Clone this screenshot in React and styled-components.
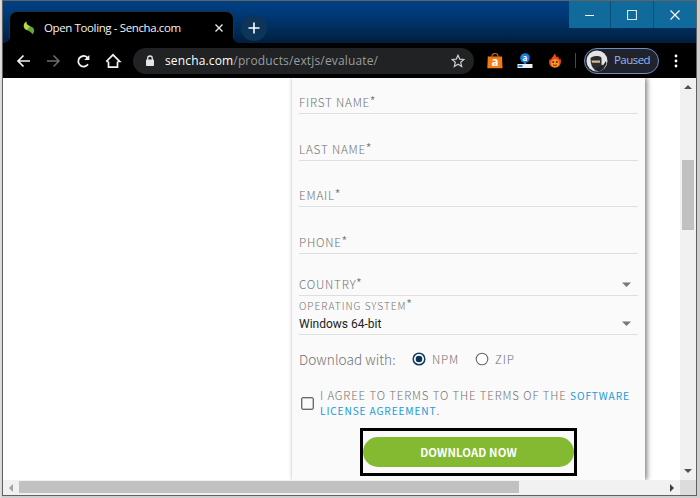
import React from 'react';
import styled, { createGlobalStyle } from 'styled-components';

const Global = createGlobalStyle`
  * { box-sizing: border-box; }
  html, body { margin: 0; padding: 0; background: #d4d4d4; overflow: hidden; }
`;

const ui = `'Open Sans', 'Noto Sans', sans-serif`;
const formFont = `'Noto Sans CJK JP', 'Noto Sans', sans-serif`;

const Desktop = styled.div`
  width: 700px;
  height: 498px;
  padding: 0 3px 2px 2px;
  background: linear-gradient(90deg, #e4e4e4, #cfcfcf 2px, #cfcfcf);
`;
const Window = styled.div`
  width: 695px;
  height: 496px;
  border: 1px solid #626262;
  display: flex;
  flex-direction: column;
  background: #fff;
`;
const TitleBar = styled.div`
  height: 42px;
  flex: none;
  display: flex;
  align-items: flex-end;
  background: linear-gradient(180deg, #004084 0%, #003a78 30%, #002d5c 65%, #001e3e 100%);
`;
const Tab = styled.div`
  position: relative;
  width: 223px;
  height: 31px;
  margin-left: 7px;
  padding: 0 9px 0 13px;
  display: flex;
  align-items: center;
  border-radius: 7px 7px 0 0;
  background: #000;
  box-shadow: 0 0 0 1px #1c3048;
  clip-path: inset(-1px -7px 0 -7px);
  &::before, &::after {
    content: '';
    position: absolute;
    bottom: 0;
    width: 6px;
    height: 6px;
  }
  &::before {
    left: -6px;
    background: radial-gradient(circle at 0 0, transparent 5.5px, #000 6px);
  }
  &::after {
    right: -6px;
    background: radial-gradient(circle at 100% 0, transparent 5.5px, #000 6px);
  }
`;
const TabTitle = styled.span`
  margin-left: 9px;
  flex: 1;
  font: 11.5px/16px ${ui};
  letter-spacing: -0.38px;
  color: #f4f4f4;
  white-space: nowrap;
`;
const NewTab = styled.div`
  width: 26px;
  height: 26px;
  margin: 0 0 2px 8px;
  border-radius: 50%;
  background: #0c3558;
  display: flex;
  align-items: center;
  justify-content: center;
`;
const Controls = styled.div`
  display: flex;
  gap: 1px;
  margin-left: auto;
  align-self: flex-start;
  background: #0b4d7f;
`;
const Control = styled.div`
  width: ${p => p.$w || 42}px;
  height: 27px;
  background: #106a9b;
  display: flex;
  align-items: center;
  justify-content: center;
`;
const Toolbar = styled.div`
  height: 35px;
  flex: none;
  display: flex;
  align-items: center;
  background: #000;
  padding-left: 12px;
`;
const NavIcons = styled.div`
  display: flex;
  gap: 10px;
  width: 118px;
  svg { display: block; }
`;
const Address = styled.div`
  width: 341px;
  height: 26px;
  border-radius: 13px;
  background: #202223;
  display: flex;
  align-items: center;
  padding: 0 9px 0 11px;
`;
const Url = styled.span`
  flex: 1;
  margin-left: 9px;
  font: 12px/18px ${ui};
  letter-spacing: 0.15px;
  color: #9a9da0;
  white-space: nowrap;
`;
const Host = styled.span` color: #fff; `;
const Extensions = styled.div`
  display: flex;
  gap: 14px;
  margin-left: 13px;
  svg { display: block; }
`;
const Divider = styled.div`
  width: 1px;
  height: 15px;
  margin: 0 8px 0 12px;
  background: #46484b;
`;
const Profile = styled.div`
  width: 75px;
  height: 26px;
  border: 1px solid #6d8fc4;
  border-radius: 13px;
  background: #20232b;
  display: flex;
  align-items: center;
  gap: 6px;
  padding: 0 0 1px 1px;
  font: 11.5px/16px ${ui};
  letter-spacing: -0.55px;
  color: #93b7f3;
  svg { margin-top: 1px; }
`;
const MenuDots = styled.svg` margin-left: 15px; `;

const Main = styled.div`
  flex: 1;
  display: flex;
  min-height: 0;
`;
const Page = styled.div`
  width: 677px;
  padding-left: 289px;
  overflow: hidden;
`;
const Card = styled.div`
  width: 353px;
  height: 402px;
  padding: 0 8px 0 7px;
  background: #fafafa;
  box-shadow: 2px 0 5px rgba(0,0,0,0.5), -1px 0 2px rgba(0,0,0,0.04);
  clip-path: inset(0 -9px 0 -4px);
  font-family: ${formFont};
  color: #747474;
  display: flex;
  flex-direction: column;
`;
const Field = styled.div`
  height: ${p => p.$h}px;
  flex: none;
  width: 339px;
  border-bottom: 1px solid #dedede;
  display: flex;
  flex-direction: column;
  justify-content: flex-end;
  padding-bottom: ${p => p.$pb ?? 4}px;
`;
const LabelLine = styled.div`
  display: flex;
  justify-content: space-between;
  align-items: center;
  padding-right: 7px;
`;
const Label = styled.span`
  font-size: ${p => p.$size || 11.7}px;
  line-height: 15px;
  letter-spacing: ${p => p.$ls || 0.78}px;
  font-weight: 300;
  white-space: nowrap;
`;
const Star = styled.span`
  font-size: 14px;
  line-height: 10px;
  letter-spacing: 0;
  margin-left: -0.5px;
`;
const Value = styled.span`
  margin-top: 3px;
  font: 12px/16px Roboto, sans-serif;
  color: #222;
`;
const CaretIcon = styled.svg` margin-top: 2px; `;
const Choices = styled.div`
  height: 46px;
  flex: none;
  display: flex;
  align-items: center;
  padding-top: 1px;
`;
const Prompt = styled.span`
  width: 113px;
  font-size: 13.6px;
  font-weight: 300;
  line-height: 20px;
  letter-spacing: 0.05px;
  white-space: nowrap;
`;
const RadioText = styled(Label)`
  width: ${p => p.$w}px;
  margin: -1px 0 0 6px;
`;
const Agreement = styled.div`
  height: 46px;
  flex: none;
  display: flex;
  align-items: flex-start;
  padding-top: 7px;
`;
const Checkbox = styled.div`
  width: 13px;
  height: 13px;
  flex: none;
  margin: 9px 6px 0 2px;
  border: 1px solid #6b6b6b;
  border-radius: 2px;
  box-shadow: inset 0 0 0 0.5px #8a8a8a;
`;
const Terms = styled.div` display: flex; flex-direction: column; `;
const TermLine = styled.div`
  font-size: 11.4px;
  line-height: 15px;
  font-weight: 300;
  letter-spacing: 0.88px;
  white-space: nowrap;
`;
const Link = styled.span`
  color: #199ad8;
  font-size: 10.2px;
  font-weight: 400;
  letter-spacing: 0.85px;
`;
const Highlight = styled.div`
  width: 217px;
  height: 48px;
  flex: none;
  margin: 1px 0 0 61px;
  border: 3px solid #000;
  padding: 6px 0;
`;
const Download = styled.button`
  display: block;
  width: 100%;
  height: 30px;
  padding: 0 0 1px;
  border: 0;
  border-radius: 15px;
  background: #84ba32;
  color: #fff;
  font: 700 11.3px/18px ${formFont};
  letter-spacing: 0.1px;
`;
const VBar = styled.div`
  width: 16px;
  background: #f1f1f1;
  display: flex;
  flex-direction: column;
  align-items: center;
  padding: 6px 0 6px;
`;
const VThumb = styled.div`
  width: 12px;
  height: 70px;
  margin: 71px 0 auto;
  background: #c1c1c1;
`;
const HBar = styled.div`
  height: 15px;
  flex: none;
  display: flex;
  align-items: center;
  background: #f1f1f1;
  padding-left: 5px;
`;
const HThumb = styled.div`
  width: 500px;
  height: 12px;
  margin: 0 auto 1px 6px;
  background: #c1c1c1;
`;
const Corner = styled.div`
  width: 16px;
  height: 15px;
  margin-left: 5px;
  background: #dcdcdc;
`;

const Caret = () => (
  <CaretIcon width="9" height="5"><path d="M0 .5h9L4.500 5z" fill="#777" /></CaretIcon>
);

const Radio = ({ on }) => (
  <svg width="14" height="14" viewBox="0 0 14 14">
    <circle cx="7" cy="7" r="5.8" fill="#fff" stroke={on ? '#123a5c' : '#686868'} strokeWidth={on ? 1.5 : 1.1} />
    {on && <circle cx="7" cy="7" r="3.3" fill="#0b3357" />}
  </svg>
);

export default function App() {
  return (
    <Desktop>
      <Global />
      <Window>
        <TitleBar>
          <Tab>
            <svg width="12" height="14" viewBox="0 0 12 14">
              <path d="M3.500.5C1 2 0 4.500 1.300 7c1 1.800 3.200 2.300 5 3.200 1.500.8 2.700 1.800 3.200 3.300 1.800-2 2.200-4.600.8-6.400C8.800 5.300 6 5 4.500 3.700 3.500 2.800 3.200 1.700 3.500.5z" fill="#62a93a" />
              <path d="M3.500.5C1 2 0 4.500 1.300 7c.6 1 1.500 1.600 2.500 2L7 5.300C6 4.900 5.200 4.400 4.500 3.700 3.500 2.800 3.200 1.700 3.500.5z" fill="#bfd43f" />
            </svg>
            <TabTitle>Open Tooling - Sencha.com</TabTitle>
            <svg width="10" height="10" viewBox="0 0 10 10" stroke="#eee" strokeWidth="1.3"><path d="M1.500 1.500l7 7M8.500 1.500l-7 7" /></svg>
          </Tab>
          <NewTab>
            <svg width="12" height="12" viewBox="0 0 12 12" stroke="#fff" strokeWidth="1.6"><path d="M6 .5v11M.5 6h11" /></svg>
          </NewTab>
          <Controls>
            <Control $w={41}><svg width="10" height="10"><path d="M0 5.500h9" stroke="#fff" /></svg></Control>
            <Control><svg width="10" height="10"><path d="M.5.500h9v9h-9z" fill="none" stroke="#d5e8f2" strokeWidth="1.200" /></svg></Control>
            <Control><svg width="10" height="10"><path d="M.5.500l9 9M9.500.500l-9 9" stroke="#fff" strokeWidth="1.200" /></svg></Control>
          </Controls>
        </TitleBar>
        <Toolbar>
          <NavIcons>
            <svg width="20" height="18" viewBox="0 0 20 18" fill="none" stroke="#f2f2f2" strokeWidth="1.7"><path d="M15 9H3M8.500 3.500L3 9l5.500 5.500" /></svg>
            <svg width="20" height="18" viewBox="0 0 20 18" fill="none" stroke="#6b6d70" strokeWidth="1.500"><path d="M2 9h12M8.500 3.500L14 9l-5.500 5.500" /></svg>
            <svg width="20" height="18" viewBox="0 0 20 18" fill="none" stroke="#f2f2f2" strokeWidth="1.800"><path d="M13 12.200A5.300 5.300 0 1 1 12.200 5.400L13.500 7" /><path d="M14.400 3v5H9.200z" fill="#f2f2f2" stroke="none" /></svg>
            <svg width="20" height="18" viewBox="0 0 20 18" fill="none" stroke="#f2f2f2" strokeWidth="1.700"><path d="M3.500 9.700V15.200h9V9.700M1.300 9.500L8 2.800l6.700 6.700H12.500M1.300 9.500h2.200" /></svg>
          </NavIcons>
          <Address>
            <svg width="12" height="12" viewBox="0 0 12 12"><rect x="2" y="4.500" width="8" height="6.500" rx=".8" fill="#e4e4e4" /><path d="M3.700 5V3.300a2.300 2.300 0 0 1 4.600 0V5" fill="none" stroke="#e4e4e4" strokeWidth="1.300" /></svg>
            <Url><Host>sencha.com</Host>/products/extjs/evaluate/</Url>
            <svg width="14" height="14" viewBox="0 0 14 14" fill="none" stroke="#cfcfcf" strokeWidth="1.200"><path d="M7 1.200l1.700 3.900 4.200.4-3.200 2.800 1 4.200L7 10.300l-3.700 2.200 1-4.200L1.100 5.500l4.200-.4z" /></svg>
          </Address>
          <Extensions>
            <svg width="16" height="16" viewBox="0 0 16 16">
              <path d="M.8 3.500h14.200l.5 11.800H.3z" fill="#f47b13" />
              <path d="M5 5V3a3 2.500 0 0 1 6 0v2" fill="none" stroke="#c96410" strokeWidth="1.200" />
              <text x="4.400" y="12.800" fontFamily="Open Sans" fontWeight="700" fontSize="11.500" fill="#fff">a</text>
            </svg>
            <svg width="16" height="16" viewBox="0 0 16 16">
              <circle cx="8" cy="5" r="4.800" fill="#187de0" />
              <text x="5.400" y="7.800" fontFamily="Open Sans" fontWeight="700" fontSize="8" fill="#fff">a</text>
              <path d="M7 9h2v3H7z" fill="#187de0" />
              <path d="M.5 11h15v4H.5z" fill="#eceff1" /><path d="M1.500 12h4v2h-4z" fill="#187de0" />
            </svg>
            <svg width="16" height="16" viewBox="0 0 16 16">
              <path d="M7 .8c1.500 1 2.500 2.300 2.600 3.800l1.500-1.300c.6 1.200.5 2.200 1.300 3.100l1-.8c.9 2 .8 5.200-.8 7.200-2.400 2.500-6.700 2.500-9 .2C1.600 11 1.800 7.800 2.800 6l1.200.8C4.200 4.600 6.900 3.800 7 .8z" fill="#ef4a1d" />
              <circle cx="8" cy="10.200" r="4" fill="#ff9b23" />
              <circle cx="6.300" cy="9" r="1" fill="#49210e" /><circle cx="9.800" cy="9" r="1" fill="#49210e" />
              <path d="M6 11.800q2 1.500 4 0" stroke="#70200c" fill="none" />
            </svg>
          </Extensions>
          <Divider />
          <Profile>
            <svg width="22" height="22" viewBox="0 0 22 22">
              <circle cx="11" cy="11" r="10.500" fill="#e4e4e4" />
              <path d="M4.500 8.500C5 5.500 14.500 5 15.500 8v7.500c-.3 1.500-1 2.500-2 3.500H8c-2-1.500-3.500-5-3.500-10.500z" fill="#2b2c2f" />
              <path d="M5.500 10.500h8.500v2.300H6z" fill="#d7b98a" />
              <path d="M14.500 16l1.500-1.500 1 1 3-4.500.5 3-3 5-4 2.500-6-1.500z" fill="#202226" />
            </svg>
            Paused
          </Profile>
          <MenuDots width="4" height="14" fill="#fff"><circle cx="2" cy="2" r="1.400" /><circle cx="2" cy="7" r="1.400" /><circle cx="2" cy="12" r="1.400" /></MenuDots>
        </Toolbar>
        <Main>
          <Page>
            <Card>
              <Field $h={36}><Label>FIRST NAME<Star>*</Star></Label></Field>
              <Field $h={47}><Label>LAST NAME<Star>*</Star></Label></Field>
              <Field $h={46}><Label>EMAIL<Star>*</Star></Label></Field>
              <Field $h={47}><Label>PHONE<Star>*</Star></Label></Field>
              <Field $h={42}><LabelLine><Label>COUNTRY<Star>*</Star></Label><Caret /></LabelLine></Field>
              <Field $h={39} $pb={2}>
                <Label $size={10.1} $ls={1}>OPERATING SYSTEM<Star>*</Star></Label>
                <LabelLine><Value>Windows 64-bit</Value><Caret /></LabelLine>
              </Field>
              <Choices>
                <Prompt>Download with:</Prompt>
                <Radio on /><RadioText $w={43}>NPM</RadioText>
                <Radio /><RadioText $w={30}>ZIP</RadioText>
              </Choices>
              <Agreement>
                <Checkbox />
                <Terms>
                  <TermLine>I AGREE TO TERMS TO THE TERMS OF THE <Link>SOFTWARE</Link></TermLine>
                  <TermLine><Link>LICENSE AGREEMENT</Link>.</TermLine>
                </Terms>
              </Agreement>
              <Highlight><Download>DOWNLOAD NOW</Download></Highlight>
            </Card>
          </Page>
          <VBar>
            <svg width="8" height="5"><path d="M0 5L4 1l4 4z" fill="#505050" /></svg>
            <VThumb />
            <svg width="8" height="5"><path d="M0 0h8L4 4z" fill="#505050" /></svg>
          </VBar>
        </Main>
        <HBar>
          <svg width="5" height="8"><path d="M5 0v8L1 4z" fill="#a3a3a3" /></svg>
          <HThumb />
          <svg width="5" height="8"><path d="M0 0v8l4-4z" fill="#404040" /></svg>
          <Corner />
        </HBar>
      </Window>
    </Desktop>
  );
}
